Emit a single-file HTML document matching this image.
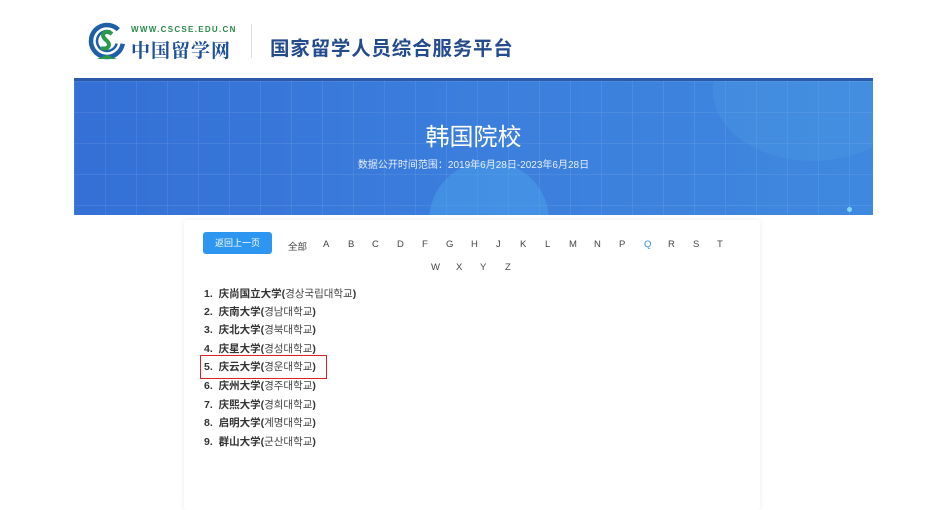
<!DOCTYPE html>
<html><head><meta charset="utf-8"><style>
*{margin:0;padding:0;box-sizing:border-box}
body{width:949px;height:503px;background:#fff;position:relative;overflow:hidden;font-family:"Liberation Sans","Noto Sans CJK SC",sans-serif}
.abs{position:absolute}
.banner{left:74px;top:78px;width:799px;height:137px;background:linear-gradient(90deg,#3470d6 0%,#3b7edc 50%,#3f88df 100%);border-top:3px solid #2c5aa8;overflow:hidden}
.grid{position:absolute;inset:0;background-image:linear-gradient(rgba(255,255,255,.08) 1px,transparent 1px),linear-gradient(90deg,rgba(255,255,255,.08) 1px,transparent 1px);background-size:31px 31px}
.card{left:184px;top:220px;width:576px;height:290px;background:#fff;box-shadow:0 0 6px rgba(0,0,0,.08);border-radius:3px}
.letters span{position:absolute;font-size:9.5px;color:#444}
.list div{position:absolute;left:204px;font-size:10.5px;font-weight:bold;color:#333;white-space:nowrap}
.list i{font-style:normal;font-weight:normal;color:#444}
</style></head><body>
<svg class="abs" style="left:87px;top:21px" width="42" height="44" viewBox="0 0 42 44">
<circle cx="20" cy="20" r="16" fill="none" stroke="#1e5fa8" stroke-width="4.5" stroke-dasharray="85 16" transform="rotate(10 20 20)"/>
<circle cx="20" cy="20" r="10" fill="none" stroke="#1e5fa8" stroke-width="2.5" stroke-dasharray="48 15" transform="rotate(15 20 20)"/>
<path d="M25 13 C19 8 12 13 19 19 C25 24 21 29 14 27" fill="none" stroke="#2a9a4a" stroke-width="4"/>
<path d="M10 38 L20 34 L30 38 Z" fill="#2a9a4a"/>
</svg>
<div class="abs" style="left:131px;top:25px;font-size:8px;color:#2a8a4a;letter-spacing:1.3px;font-weight:bold">WWW.CSCSE.EDU.CN</div>
<div class="abs" style="left:131px;top:36px;font-size:19px;color:#1e4f9a;font-family:'Noto Serif CJK SC',serif;font-weight:bold;letter-spacing:1px">中国留学网</div>
<div class="abs" style="left:251px;top:24px;width:1px;height:34px;background:#ddd"></div>
<div class="abs" style="left:270px;top:32px;font-size:19.5px;color:#244b8c;letter-spacing:.8px;font-weight:bold">国家留学人员综合服务平台</div>
<div class="abs banner"><div class="grid"></div>
<div style="position:absolute;left:355px;top:80px;width:120px;height:120px;border-radius:50%;background:rgba(80,170,240,.4)"></div>
<div style="position:absolute;right:-40px;top:-60px;width:200px;height:140px;border-radius:50%;background:rgba(90,170,235,.2)"></div>
<div style="position:absolute;left:0;width:100%;text-align:center;top:36px;font-size:24px;color:#fff">韩国院校</div>
<div style="position:absolute;left:0;width:100%;text-align:center;top:75px;font-size:10px;color:#e6efff">数据公开时间范围：2019年6月28日-2023年6月28日</div>
<div style="position:absolute;left:773px;top:126px;width:5px;height:5px;border-radius:50%;background:#7fd8f5"></div>
</div>
<div class="abs card"></div>
<div class="abs" style="left:203px;top:232px;width:69px;height:22px;background:#2d96f0;border-radius:3px;color:#fff;font-size:9px;text-align:center;line-height:22px">返回上一页</div>
<div class="letters">
<span style="left:288px;top:239px">全部</span>
<span style="left:323px;top:239px">A</span><span style="left:348px;top:239px">B</span><span style="left:372px;top:239px">C</span><span style="left:397px;top:239px">D</span><span style="left:422px;top:239px">F</span><span style="left:446px;top:239px">G</span><span style="left:471px;top:239px">H</span><span style="left:496px;top:239px">J</span><span style="left:520px;top:239px">K</span><span style="left:545px;top:239px">L</span><span style="left:569px;top:239px">M</span><span style="left:594px;top:239px">N</span><span style="left:619px;top:239px">P</span><span style="left:644px;top:239px;color:#3a8ee6">Q</span><span style="left:668px;top:239px">R</span><span style="left:693px;top:239px">S</span><span style="left:717px;top:239px">T</span>
<span style="left:431px;top:262px">W</span><span style="left:456px;top:262px">X</span><span style="left:480px;top:262px">Y</span><span style="left:505px;top:262px">Z</span>
</div>
<div class="list">
<div style="top:286px">1.&nbsp; 庆尚国立大学(<i>경상국립대학교</i>)</div>
<div style="top:304px">2.&nbsp; 庆南大学(<i>경남대학교</i>)</div>
<div style="top:322px">3.&nbsp; 庆北大学(<i>경북대학교</i>)</div>
<div style="top:341px">4.&nbsp; 庆星大学(<i>경성대학교</i>)</div>
<div style="top:359px">5.&nbsp; 庆云大学(<i>경운대학교</i>)</div>
<div style="top:378px">6.&nbsp; 庆州大学(<i>경주대학교</i>)</div>
<div style="top:397px">7.&nbsp; 庆熙大学(<i>경희대학교</i>)</div>
<div style="top:415px">8.&nbsp; 启明大学(<i>계명대학교</i>)</div>
<div style="top:434px">9.&nbsp; 群山大学(<i>군산대학교</i>)</div>
</div>
<div class="abs" style="left:200px;top:355px;width:127px;height:24px;border:1.5px solid #e02020"></div>
</body></html>
